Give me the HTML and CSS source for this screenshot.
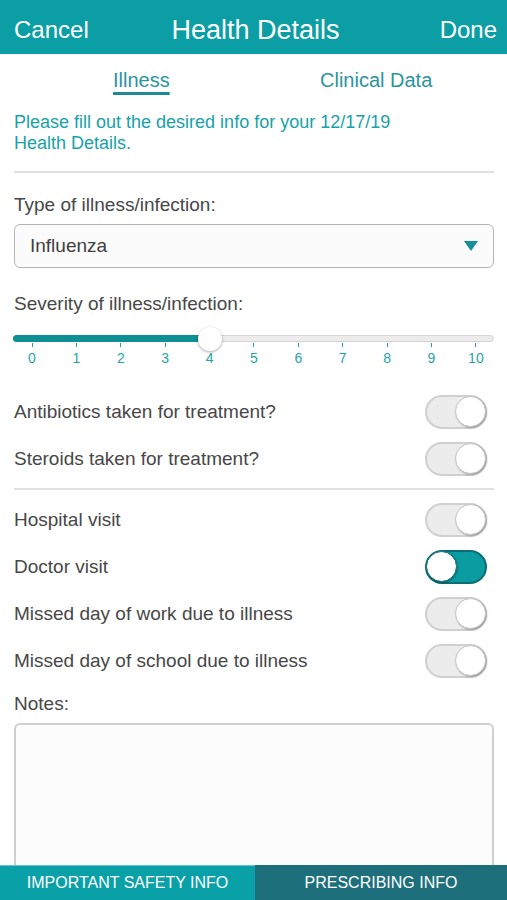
FILE: index.html
```
<!DOCTYPE html>
<html lang="en">
<head>
    <meta charset="UTF-8">
    <meta name="viewport" content="width=device-width, initial-scale=1.0">
    <title>Health Details</title>
    <link rel="stylesheet" href="styles.css">
</head>
<body>

<div class="header">
    <span class="header-btn">Cancel</span>
    <span class="header-title">Health Details</span>
    <span class="header-btn done">Done</span>
</div>

<div class="tabs">
    <span class="tab active">Illness</span>
    <span class="tab">Clinical Data</span>
</div>

<div class="content">
    <p class="intro">Please fill out the desired info for your 12/17/19<br>Health Details.</p>

    <hr class="divider">

    <label class="field-label">Type of illness/infection:</label>
    <div class="select">
        <span>Influenza</span>
        <span class="caret"></span>
    </div>

    <label class="field-label severity">Severity of illness/infection:</label>
    <div class="slider">
        <div class="track">
            <div class="fill"></div>
            <div class="thumb"></div>
        </div>
        <div class="ticks">
            <span>0</span><span>1</span><span>2</span><span>3</span><span>4</span><span>5</span>
            <span>6</span><span>7</span><span>8</span><span>9</span><span>10</span>
        </div>
    </div>

    <div class="toggles first">
        <div class="toggle-row">
            <span>Antibiotics taken for treatment?</span>
            <span class="switch"></span>
        </div>
        <div class="toggle-row">
            <span>Steroids taken for treatment?</span>
            <span class="switch"></span>
        </div>
    </div>

    <hr class="divider">

    <div class="toggles">
        <div class="toggle-row">
            <span>Hospital visit</span>
            <span class="switch"></span>
        </div>
        <div class="toggle-row">
            <span>Doctor visit</span>
            <span class="switch on"></span>
        </div>
        <div class="toggle-row">
            <span>Missed day of work due to illness</span>
            <span class="switch"></span>
        </div>
        <div class="toggle-row">
            <span>Missed day of school due to illness</span>
            <span class="switch"></span>
        </div>
    </div>

    <label class="field-label notes">Notes:</label>
    <div class="notes-box"></div>
</div>

<div class="footer">
    <span class="footer-btn safety">IMPORTANT SAFETY INFO</span>
    <span class="footer-btn prescribing">PRESCRIBING INFO</span>
</div>

</body>
</html>
```

FILE: styles.css
```
body {
    margin: 0;
    font-family: "Liberation Sans", Arial, sans-serif;
    background-color: #fff;
    color: #474747;
    height: 900px;
    overflow: hidden;
}
.header {
    height: 54px;
    box-sizing: border-box;
    padding: 6px 10px 0 14px;
    background-color: #0b9ea4;
    display: grid;
    grid-template-columns: 1fr auto 1fr;
    align-items: center;
    color: #fff;
    font-size: 24px;
}
.header-title {
    font-size: 27px;
}
.done {
    justify-self: end;
}
.tabs {
    display: flex;
    height: 46px;
    box-sizing: border-box;
    padding-top: 6px;
    align-items: center;
}
.tab {
    flex: 1;
    font-size: 20px;
    color: #2a95a0;
}
.tab:first-child {
    flex: 0 0 207px;
    padding-left: 113px;
}
.tab.active {
    text-decoration: underline;
    text-decoration-thickness: 3px;
    text-underline-offset: 5px;
    text-decoration-color: #1d8b96;
}
.content {
    padding: 0 13px 0 14px;
}
.intro {
    margin: 12px 0 0;
    font-size: 18px;
    line-height: 21px;
    color: #17a2a8;
}
.divider {
    border: none;
    border-top: 2px solid #e2e2e2;
    margin: 17px 0 0;
}
.field-label {
    display: block;
    font-size: 19px;
    margin-top: 21px;
}
.select {
    margin-top: 8px;
    height: 42px;
    border: 1px solid #b5b5b5;
    border-radius: 6px;
    background: #fbfbfb;
    display: flex;
    align-items: center;
    justify-content: space-between;
    padding: 0 15px 0 15px;
    font-size: 19px;
    color: #3f3f3f;
}
.caret {
    width: 0;
    height: 0;
    border-left: 7px solid transparent;
    border-right: 7px solid transparent;
    border-top: 10px solid #138f98;
}
.field-label.severity {
    margin-top: 25px;
}
.slider {
    margin-top: 20px;
}
.track {
    position: relative;
    height: 7px;
    margin: 0 0 0 -1px;
    background: #ececec;
    border: 1px solid #d6d6d6;
    border-radius: 4px;
    box-sizing: border-box;
}
.fill {
    width: 197px;
    height: 7px;
    margin-top: -1px;
    margin-left: -1px;
    background: #0e8f95;
    border-radius: 4px 0 0 4px;
}
.thumb {
    position: absolute;
    left: 184px;
    top: -9px;
    width: 24px;
    height: 24px;
    border-radius: 50%;
    background: #fff;
    box-shadow: 0 1px 3px rgba(0, 0, 0, 0.35);
}
.ticks {
    display: flex;
    justify-content: space-between;
    margin: 0 8px;
}
.ticks span {
    width: 20px;
    text-align: center;
    font-size: 14px;
    color: #1ea4aa;
}
.ticks span::before {
    content: "";
    display: block;
    width: 1px;
    height: 4px;
    margin: 1px auto 3px;
    background: #1ea4aa;
}
.toggles.first {
    margin-top: 22px;
}
.toggle-row {
    height: 47px;
    display: flex;
    align-items: center;
    justify-content: space-between;
    font-size: 19px;
}
.switch {
    position: relative;
    width: 62px;
    height: 34px;
    margin-right: 7px;
    border-radius: 17px;
    background: #ececec;
    border: 2px solid #d0d0d0;
    box-sizing: border-box;
}
.switch::after {
    content: "";
    position: absolute;
    right: 0;
    top: 0;
    width: 29px;
    height: 29px;
    border-radius: 50%;
    background: #fff;
    border: 1px solid #c4c4c4;
    box-sizing: content-box;
    top: -1px;
    right: -1px;
    box-shadow: 1px 1px 2px rgba(0, 0, 0, 0.25);
}
.switch.on {
    background: #0b9ca2;
    border-color: #0d6d74;
}
.switch.on::after {
    left: -1px;
    right: auto;
    border-color: #0d6d74;
}
.toggles + .divider {
    margin-top: 6px;
}
.divider + .toggles {
    margin-top: 6px;
}
.field-label.notes {
    margin-top: 9px;
}
.notes-box {
    margin-top: 8px;
    height: 170px;
    border: 2px solid #cfcfcf;
    border-radius: 6px;
    background: #fcfcfc;
}
.footer {
    position: fixed;
    left: 0;
    right: 0;
    bottom: 0;
    height: 35px;
    display: flex;
}
.footer-btn {
    display: flex;
    align-items: center;
    justify-content: center;
    color: #fff;
    font-size: 16px;
}
.safety {
    flex: 0 0 255px;
    background: #0aa0a7;
    border-top: 1px solid #5cc8cc;
    box-sizing: border-box;
}
.prescribing {
    flex: 1;
    background: #1e6f7c;
}
```
